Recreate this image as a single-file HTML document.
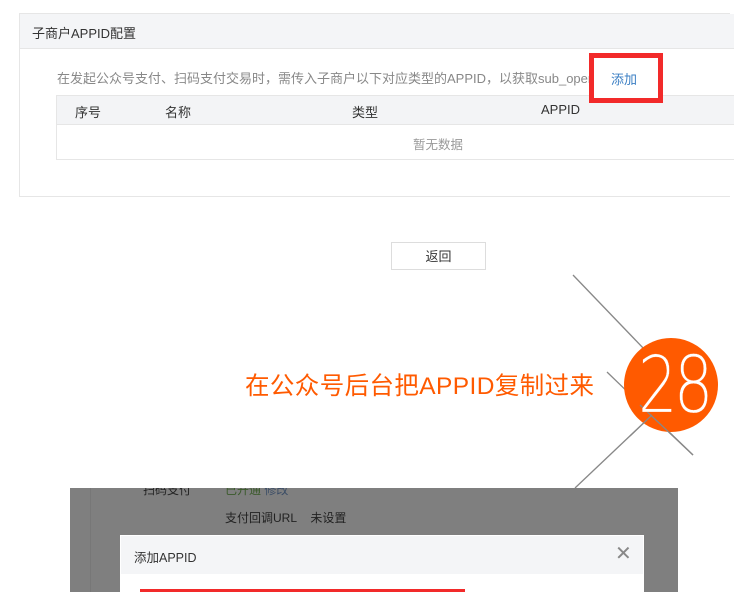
<!DOCTYPE html>
<html><head><meta charset="utf-8"><style>
body{margin:0;width:734px;height:592px;overflow:hidden;background:#fff;font-family:"Liberation Sans","Noto Sans CJK SC",sans-serif;position:relative}
.a{position:absolute}
</style></head><body>
<div class="a" style="left:19px;top:13px;width:710px;height:182px;border:1px solid #e6e6e6;border-right:none"></div>
<div class="a" style="left:20px;top:14px;width:714px;height:34px;background:#f4f5f7;border-bottom:1px solid #e6e6e6"></div>
<div class="a" style="left:32px;top:23px;font-size:13px;color:#333">子商户APPID配置</div>
<div class="a" style="left:57px;top:68px;font-size:13px;color:#888;white-space:nowrap;width:540px;overflow:hidden">在发起公众号支付、扫码支付交易时，需传入子商户以下对应类型的APPID，以获取sub_openid</div>
<div class="a" style="left:56px;top:95px;width:678px;height:63px;border:1px solid #e6e6e6;border-right:none"></div>
<div class="a" style="left:57px;top:96px;width:677px;height:28px;background:#f3f4f6;border-bottom:1px solid #e6e6e6"></div>
<div class="a" style="left:75px;top:102px;font-size:13px;color:#333">序号</div>
<div class="a" style="left:165px;top:102px;font-size:13px;color:#333">名称</div>
<div class="a" style="left:352px;top:102px;font-size:13px;color:#333">类型</div>
<div class="a" style="left:541px;top:102px;font-size:13px;color:#333">APPID</div>
<div class="a" style="left:413px;top:134px;font-size:12.5px;color:#999">暂无数据</div>
<div class="a" style="left:589px;top:53px;width:64px;height:40px;border:5px solid #f22a2a;background:#fff"></div>
<div class="a" style="left:611px;top:69px;font-size:13px;color:#3b7fc4">添加</div>
<div class="a" style="left:391px;top:242px;width:95px;height:28px;border:1px solid #ddd;box-sizing:border-box;text-align:center;line-height:27px;font-size:13px;color:#333">返回</div>
<svg class="a" style="left:0;top:0" width="734" height="592">
<line x1="573" y1="275" x2="645" y2="350" stroke="#888" stroke-width="1.3"/>
<line x1="607" y1="372" x2="693" y2="455" stroke="#888" stroke-width="1.3"/>
<line x1="575" y1="488" x2="652" y2="415" stroke="#888" stroke-width="1.3"/>
<circle cx="671" cy="385" r="47" fill="#ff5a00"/>
<line x1="640" y1="405" x2="693" y2="455" stroke="#888" stroke-width="1.3"/>
<line x1="652" y1="415" x2="630" y2="436" stroke="#888" stroke-width="1.3"/>
</svg>
<div class="a" style="left:638px;top:342px;font-size:78px;color:#fff;letter-spacing:-5px;line-height:88px;font-weight:300;font-family:'DejaVu Sans',sans-serif;transform:scaleX(0.8);transform-origin:left;-webkit-text-stroke:0.3px #ff5a00">28</div>
<div class="a" style="left:245px;top:367px;font-size:24.5px;color:#ff5a00;white-space:nowrap;letter-spacing:0.4px">在公众号后台把APPID复制过来</div>
<div class="a" style="left:70px;top:488px;width:608px;height:104px;background:#7f7f7f;overflow:hidden">
<div class="a" style="left:20px;top:0;width:1px;height:104px;background:#777"></div>
<div class="a" style="left:73px;top:-7px;font-size:12px;color:#222">扫码支付</div>
<div class="a" style="left:155px;top:-7px;font-size:12px;color:#3a5a2a">已开通 <span style="color:#3b4d66">修改</span></div>
<div class="a" style="left:155px;top:21px;font-size:12px;color:#222">支付回调URL&nbsp;&nbsp;&nbsp;&nbsp;未设置</div>
</div>
<div class="a" style="left:120px;top:535px;width:524px;height:57px;background:#fff"></div>
<div class="a" style="left:121px;top:536px;width:522px;height:38px;background:#f4f5f7"></div>
<div class="a" style="left:134px;top:547px;font-size:12.5px;color:#333">添加APPID</div>
<div class="a" style="left:615px;top:541px;font-size:20px;color:#888">✕</div>
<div class="a" style="left:140px;top:589px;width:325px;height:3px;background:#f22a2a"></div>
</body></html>
